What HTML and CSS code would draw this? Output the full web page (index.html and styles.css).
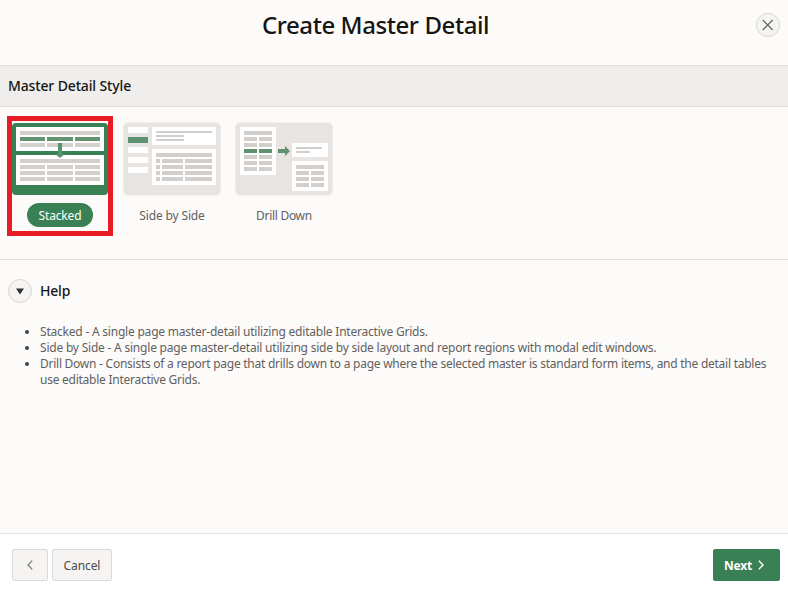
FILE: index.html
```html
<!DOCTYPE html>
<html lang="en">
<head>
<meta charset="utf-8">
<title>Create Master Detail</title>
<link rel="stylesheet" href="styles.css">
</head>
<body>
<div class="dialog">
  <header class="header">
    <h1 class="title">Create Master Detail</h1>
    <button class="round close" aria-label="Close">
      <svg width="12" height="12" viewBox="0 0 12 12"><path d="M.7 1l10 10M10.7 1L.7 11" fill="none" stroke="#666" stroke-width="1.15"/></svg>
    </button>
  </header>
  <h2 class="section-title"><span>Master Detail Style</span></h2>
  <main class="content">
    <div class="styles">
      <div class="option selected">
        <svg class="thumb" width="96" height="72" viewBox="0 0 96 72">
          <rect width="96" height="72" rx="4" fill="#3a8055"/>
          <path fill="#fff" d="M4 4h88v24H4zM4 32h88v30H4z"/>
          <path fill="#d4cfca" d="M8 8h80v4H8zM8 20h25v4H8zM35 20h26v4H35zM63 20h25v4H63zM8 36h80v4H8zM8 42h25v4H8zM35 42h26v4H35zM63 42h25v4H63zM8 48h25v4H8zM35 48h26v4H35zM63 48h25v4H63zM8 54h25v4H8zM35 54h26v4H35zM63 54h25v4H63z"/>
          <path fill="#649372" d="M8 14h25v4H8zM35 14h26v4H35zM63 14h25v4H63z"/>
          <path fill="#559570" d="M46 20h4v11h3l-5 4-5-4h3z"/>
        </svg>
        <span class="label">Stacked</span>
      </div>
      <div class="option">
        <svg class="thumb shade" width="96" height="72" viewBox="0 0 96 72">
          <rect width="96" height="72" rx="4" fill="#e7e4e1"/>
          <path fill="#fff" d="M4 4h20v6H4zM4 24h20v6H4zM4 34h20v6H4zM4 44h20v6H4zM28 4h64v18H28zM28 26h64v36H28z"/>
          <path fill="#5f9170" d="M4 14h20v6H4z"/>
          <path fill="#d1cecb" d="M32 8h56v2H32zM32 12h28v2H32zM32 16h28v2H32zM32 30h56v4H32zM32 36h4v4h-4zM38 36h21v4H38zM61 36h27v4H61zM32 42h4v4h-4zM38 42h21v4H38zM61 42h27v4H61zM32 48h4v4h-4zM38 48h21v4H38zM61 48h27v4H61zM32 54h4v4h-4zM38 54h21v4H38zM61 54h27v4H61z"/>
        </svg>
        <span class="label">Side by Side</span>
      </div>
      <div class="option">
        <svg class="thumb shade" width="96" height="72" viewBox="0 0 96 72">
          <rect width="96" height="72" rx="4" fill="#e7e4e1"/>
          <path fill="#fff" d="M4 4h36v48H4zM56 20h36v14H56zM56 38h36v30H56z"/>
          <path fill="#d1cecb" d="M8 8h28v4H8zM8 14h13v4H8zM23 14h13v4H23zM8 20h13v4H8zM23 20h13v4H23zM8 32h13v4H8zM23 32h13v4H23zM8 38h13v4H8zM23 38h13v4H23zM8 44h13v4H8zM23 44h13v4H23zM60 24h26v2H60zM60 28h14v2H60zM60 42h28v4H60zM60 48h13v4H60zM75 48h13v4H75zM60 54h13v4H60zM75 54h13v4H75zM60 60h13v4H60zM75 60h13v4H75z"/>
          <path fill="#5f9170" d="M8 26h13v4H8zM23 26h13v4H23zM42 26h7v-3l5 5-5 5v-3h-7z"/>
        </svg>
        <span class="label drill">Drill Down</span>
      </div>
    </div>
    <section class="help">
      <div class="help-head">
        <button class="round" aria-label="Collapse help">
          <svg width="8" height="7" viewBox="0 0 8 7"><path d="M0 .5h8L4 6.5z" fill="#333"/></svg>
        </button>
        <h3 class="help-title">Help</h3>
      </div>
      <ul class="help-list">
        <li><span class="line">Stacked - A single page master-detail utilizing editable Interactive Grids.</span></li>
        <li><span class="line">Side by Side - A single page master-detail utilizing side by side layout and report regions with modal edit windows.</span></li>
        <li><span class="line tight">Drill Down - Consists of a report page that drills down to a page where the selected master is standard form items, and the detail tables</span> <span class="line tight">use editable Interactive Grids.</span></li>
      </ul>
    </section>
  </main>
  <footer class="footer">
    <button class="btn back" aria-label="Back">
      <svg width="6" height="10" viewBox="0 0 6 10"><path d="M5.2 .7L1 5l4.2 4.3" fill="none" stroke="#777" stroke-width="1.2"/></svg>
    </button>
    <button class="btn cancel">Cancel</button>
    <button class="btn next"><span>Next</span>
      <svg width="6" height="10" viewBox="0 0 6 10"><path d="M.8 .7L5 5 .8 9.3" fill="none" stroke="#fff" stroke-width="1.4"/></svg>
    </button>
  </footer>
</div>
</body>
</html>
```
FILE: styles.css
```css
* { box-sizing: border-box; }
body {
  margin: 0;
  font-family: "Noto Sans", "Open Sans", sans-serif;
  font-size: 12px;
  color: #62605d;
  background: #fcfbfa;
}
h1, h2, h3 { margin: 0; font-weight: 400; color: #161513; }
button { font: inherit; padding: 0; cursor: pointer; }
svg { display: block; }
.dialog { height: 593px; display: flex; flex-direction: column; overflow: hidden; }
.header {
  height: 66px;
  flex: none;
  display: grid;
  grid-template-columns: 32px 1fr 32px;
  padding-bottom: 15px;
  align-items: center;
  border-bottom: 1px solid #dfdedc;
}
.title {
  grid-column: 2;
  text-align: center;
  font-size: 24px;
  line-height: 32px;
  font-weight: 500;
  letter-spacing: -0.42px;
  margin-left: -37px;
}
.round {
  width: 24px;
  height: 24px;
  border: 1px solid #d8d6d4;
  border-radius: 50%;
  background: #f5f4f2;
  display: flex;
  align-items: center;
  justify-content: center;
}
.section-title {
  height: 41px;
  flex: none;
  padding-left: 8px;
  font-size: 14px;
  line-height: 40px;
  font-weight: 500;
  letter-spacing: -0.14px;
  background: #efeeec;
  border-bottom: 1px solid #dfdedc;
}
.content { flex: 1; }
.styles {
  height: 153px;
  padding: 9px 7px;
  display: flex;
  gap: 6px;
  border-bottom: 1px solid #e2e0de;
}
.option {
  width: 106px;
  height: 120px;
  padding-top: 7px;
  display: flex;
  flex-direction: column;
  align-items: center;
  gap: 8px;
}
.selected { border: 5px solid #e81c24; padding-top: 2px; }
.shade { border-radius: 4px; box-shadow: 0 0 1px 1px #f0eeec; }
.label {
  height: 24px;
  line-height: 26px;
  letter-spacing: -0.15px;
  white-space: nowrap;
}
.drill { letter-spacing: -0.3px; }
.selected .label {
  width: 66px;
  text-align: center;
  color: #fff;
  background: #3a8055;
  border-radius: 12px;
}
.help { padding: 19px 8px 0; }
.help-head { display: flex; align-items: center; gap: 8px; height: 24px; }
.help-title { font-size: 14px; line-height: 24px; font-weight: 500; letter-spacing: -0.2px; }
.help-list { margin: 21px 0 0; padding-left: 32px; line-height: 16px; }
.help-list li::marker { color: #444; }
.line { white-space: nowrap; letter-spacing: -0.212px; }
.tight { letter-spacing: -0.254px; }
.footer {
  height: 60px;
  flex: none;
  padding: 15px 8px 12px 12px;
  display: flex;
  gap: 4px;
  background: #fff;
  border-top: 1px solid #e8e6e4;
}
.btn {
  height: 32px;
  display: flex;
  align-items: center;
  justify-content: center;
  border: 1px solid #dcdad8;
  border-radius: 2px;
  background: #f5f4f2;
  color: #4c4a48;
}
.back { width: 36px; }
.cancel { width: 60px; letter-spacing: -0.1px; }
.next {
  width: 67px;
  margin-left: auto;
  padding-right: 5px;
  gap: 6px;
  letter-spacing: -0.2px;
  border-color: #3a8055;
  background: #3a8055;
  color: #fff;
  font-weight: 700;
}
```
